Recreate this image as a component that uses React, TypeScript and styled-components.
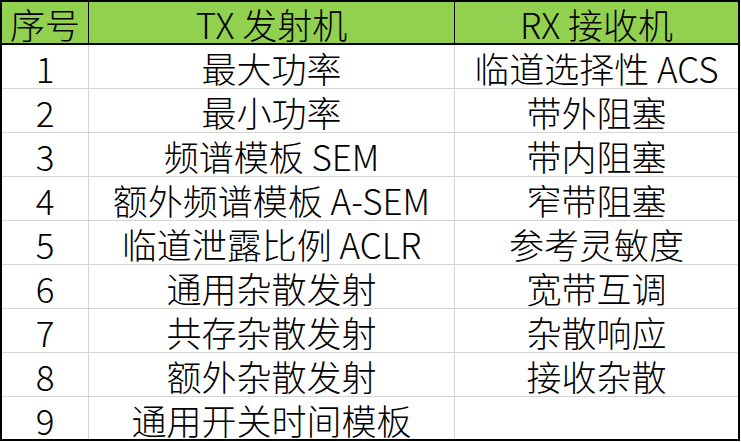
import React from "react";
import styled, { createGlobalStyle } from "styled-components";

const Global = createGlobalStyle`
  html, body { margin: 0; padding: 0; background: #ffffff; }
  body { font-family: "Noto Sans CJK SC", "Noto Sans", sans-serif; }
`;

const Table = styled.div`
  box-sizing: border-box;
  width: 740px;
  height: 441px;
  border: 2px solid #000000;
  display: grid;
  grid-template-columns: 87px 366px 283px;
  grid-template-rows: 43px repeat(8, 44px) 42px;
  background: #ffffff;
`;

const Cell = styled.div<{ $head?: boolean; $lastCol?: boolean; $lastRow?: boolean }>`
  box-sizing: border-box;
  display: flex;
  align-items: center;
  justify-content: center;
  white-space: nowrap;
  font-family: "Noto Sans CJK SC", "Noto Sans", sans-serif;
  font-size: 35px;
  font-weight: 300;
  line-height: 1;
  color: #000000;
  padding-top: 2px;
  background: ${(p) => (p.$head ? "#92d050" : "#ffffff")};
  border-right: ${(p) => (p.$lastCol ? "none" : p.$head ? "1px solid #000000" : "1px solid #d4d4d4")};
  border-bottom: ${(p) => (p.$lastRow ? "none" : p.$head ? "2px solid #000000" : "1px solid #d4d4d4")};
`;

const rows: [string, string, string][] = [
  ["1", "最大功率", "临道选择性 ACS"],
  ["2", "最小功率", "带外阻塞"],
  ["3", "频谱模板 SEM", "带内阻塞"],
  ["4", "额外频谱模板 A-SEM", "窄带阻塞"],
  ["5", "临道泄露比例 ACLR", "参考灵敏度"],
  ["6", "通用杂散发射", "宽带互调"],
  ["7", "共存杂散发射", "杂散响应"],
  ["8", "额外杂散发射", "接收杂散"],
  ["9", "通用开关时间模板", ""],
];

export default function App() {
  return (
    <>
      <Global />
      <Table>
        <Cell $head>序号</Cell>
        <Cell $head>TX 发射机</Cell>
        <Cell $head $lastCol>RX 接收机</Cell>
        {rows.map((r, i) => {
          const last = i === rows.length - 1;
          return (
            <React.Fragment key={r[0]}>
              <Cell $lastRow={last}>{r[0]}</Cell>
              <Cell $lastRow={last}>{r[1]}</Cell>
              <Cell $lastRow={last} $lastCol>{r[2]}</Cell>
            </React.Fragment>
          );
        })}
      </Table>
    </>
  );
}
